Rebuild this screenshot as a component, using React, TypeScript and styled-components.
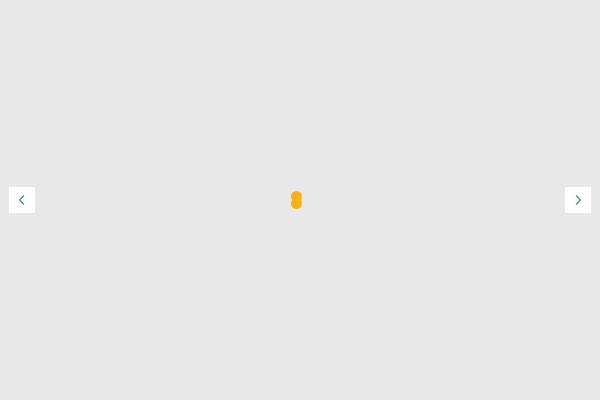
import React from "react";
import styled, { createGlobalStyle } from "styled-components";

const Global = createGlobalStyle`
  html, body { margin: 0; padding: 0; }
  body { background: #e8e8e8; font-family: "Liberation Sans", Arial, sans-serif; }
`;

const Stage = styled.div`
  width: 600px;
  height: 400px;
  background: #e8e8e8;
  display: flex;
  align-items: center;
  justify-content: space-between;
  padding: 0 9px;
  box-sizing: border-box;
  position: relative;
`;

const NavButton = styled.button`
  width: 26px;
  height: 26px;
  margin-top: 0;
  border: none;
  padding: 0;
  background: #ffffff;
  display: flex;
  align-items: center;
  justify-content: center;
  cursor: pointer;
  color: #3a8a86;
`;

const Loader = styled.div`
  position: absolute;
  left: 291px;
  top: 191px;
  width: 11px;
  height: 18px;
`;

const Dot = styled.span<{ $top: number }>`
  position: absolute;
  left: 0;
  top: ${(p) => p.$top}px;
  width: 11px;
  height: 11px;
  border-radius: 50%;
  background: #fbb017;
`;

const Chevron = ({ dir }: { dir: "left" | "right" }) => (
  <svg width="10" height="12" viewBox="0 0 10 12" fill="none">
    <path
      d={dir === "left" ? "M7 1.5 L2.5 6 L7 10.5" : "M3 1.5 L7.5 6 L3 10.5"}
      stroke="currentColor"
      strokeWidth="1.1"
    />
  </svg>
);

export default function App() {
  return (
    <>
      <Global />
      <Stage>
        <NavButton aria-label="Previous">
          <Chevron dir="left" />
        </NavButton>
        <Loader>
          <Dot $top={0} />
          <Dot $top={7} />
        </Loader>
        <NavButton aria-label="Next">
          <Chevron dir="right" />
        </NavButton>
      </Stage>
    </>
  );
}
